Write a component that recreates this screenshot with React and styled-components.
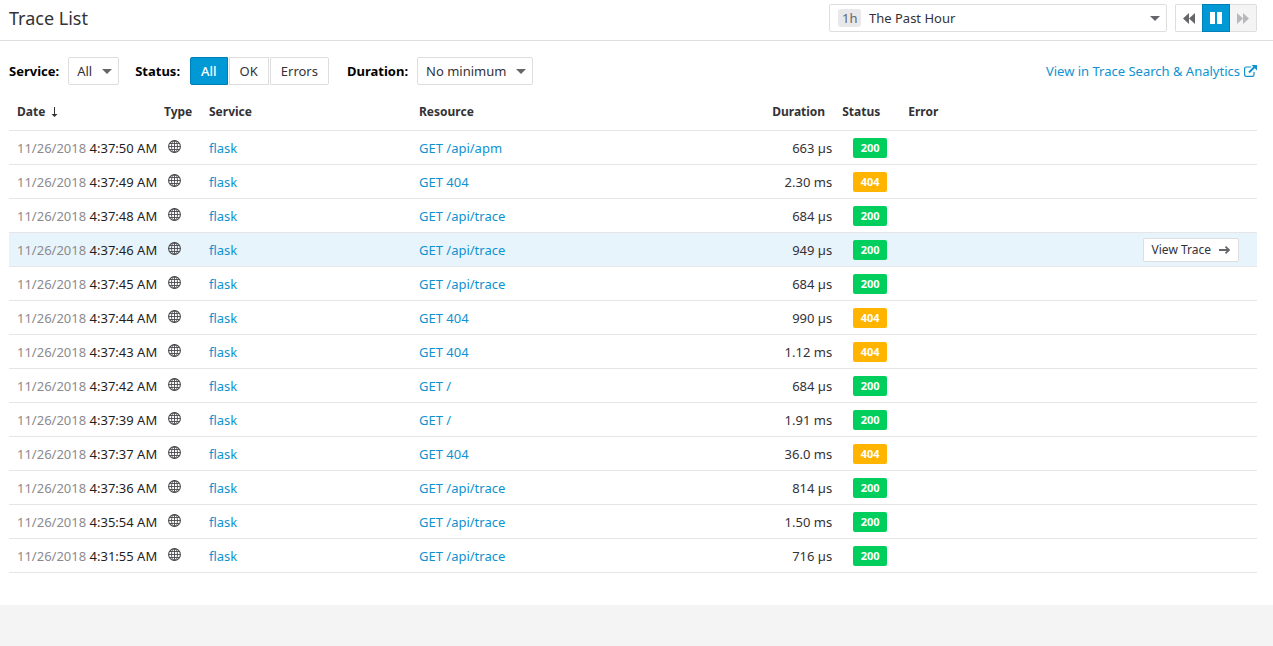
import React from "react";
import styled, { createGlobalStyle, css } from "styled-components";

const GlobalStyle = createGlobalStyle`
  *, *::before, *::after { box-sizing: border-box; }
  body {
    margin: 0;
    background: #f4f4f4;
    color: #333236;
    font-family: "Noto Sans", "Open Sans", sans-serif;
    font-size: 13px;
    line-height: 18px;
  }
  button, select { font: inherit; color: inherit; margin: 0; }
`;

const Panel = styled.main`
  min-height: 605px;
  background: #fff;
`;

const Header = styled.header`
  display: flex;
  align-items: center;
  gap: 8px;
  height: 41px;
  padding: 0 16px 4px 9px;
  border-bottom: 1px solid #dedede;
`;

const Title = styled.h1`
  flex: 1;
  margin: 0;
  font-size: 18px;
  font-weight: 400;
  line-height: 24px;
`;

const Toolbar = styled.div`
  display: flex;
  align-items: center;
  height: 28px;
  margin: 16px 16px 0 9px;
`;

const Label = styled.label`
  margin-right: ${(p) => p.$gap || 9}px;
  font-weight: 700;
  color: #000;
`;

const SelectBox = styled.div`
  position: relative;
  flex: none;
  width: ${(p) => p.$width}px;
  margin-right: ${(p) => p.$after || 0}px;
`;

const Select = styled.select`
  display: block;
  width: 100%;
  height: 28px;
  padding: 0 24px 0 ${(p) => (p.$tagged ? 39 : 8)}px;
  border: 1px solid #dedede;
  border-radius: 2px;
  background: #fff;
  appearance: none;
`;

const CaretIcon = styled.svg`
  position: absolute;
  top: 12px;
  right: 7px;
  width: 10px;
  height: 5px;
  fill: #66666a;
  pointer-events: none;
`;

const RangeTag = styled.span`
  position: absolute;
  top: 5px;
  left: 9px;
  padding: 0 4px;
  border-radius: 3px;
  background: #e8e8ea;
  color: #66666a;
  pointer-events: none;
`;

const Group = styled.div`
  display: flex;
  flex: none;
  margin-right: ${(p) => p.$after || 0}px;
  button:first-child { border-radius: 2px 0 0 2px; }
  button:last-child { border-radius: 0 2px 2px 0; }
`;

const activeStyle = css`
  border-color: #0080b8;
  background: #0099d6;
  color: #fff;
`;

const StatusButton = styled.button`
  height: 28px;
  padding: 0 10px;
  border: 1px solid #dedede;
  background: #fff;
  & + & { margin-left: 1px; }
  ${(p) => p.$active && activeStyle}
  ${(p) => p.$active && "font-weight: 500;"}
`;

const PlayerButton = styled.button`
  display: flex;
  align-items: center;
  justify-content: center;
  width: 28px;
  height: 28px;
  padding: 0;
  border: 1px solid #dedede;
  background: #fff;
  color: #66666a;
  &:first-child { border-right: 0; width: 27px; }
  &:last-child { border-left: 0; width: 27px; }
  &:disabled { background: #f4f4f4; color: #b8b8bb; }
  ${(p) => p.$active && activeStyle}
  svg { fill: currentColor; }
`;

const ExternalLink = styled.a`
  display: flex;
  align-items: center;
  gap: 4px;
  margin-left: auto;
  color: #0e93d0;
  text-decoration: none;
`;

const TableArea = styled.div`
  padding: 7px 16px 0 9px;
`;

const Table = styled.table`
  width: 100%;
  border-collapse: separate;
  border-spacing: 0;
  table-layout: fixed;
`;

const HeadCell = styled.th`
  height: 39px;
  padding: 2px 0 0 ${(p) => (p.$tight ? 2 : 8)}px;
  border-bottom: 1px solid #e6e6e6;
  font-size: 12px;
  font-weight: 700;
  text-align: left;
  white-space: nowrap;
`;

const SortIcon = styled.svg`
  margin-left: 6px;
  vertical-align: -1px;
`;

const Row = styled.tr`
  background: ${(p) => (p.$selected ? "#e8f4fb" : "#fff")};
`;

const Cell = styled.td`
  height: 34px;
  padding: ${(p) => (p.$center ? "0" : "0 8px")};
  border-bottom: 1px solid #e6e6e6;
  text-align: ${(p) => (p.$center ? "center" : p.$right ? "right" : "left")};
  white-space: nowrap;
`;

const ActionCell = styled(Cell)`
  padding: 0 18px;
  text-align: right;
`;

const TypeCell = styled(Cell)`
  padding: 0 12px 2px;
`;

const GlobeIcon = styled.svg`
  display: block;
  fill: none;
  stroke: #4a494d;
`;

const Day = styled.span`
  color: #8c8a8e;
`;

const Time = styled.span`
  color: #1f1e22;
`;

const CellLink = styled.a`
  color: #0e93d0;
  text-decoration: none;
`;

const Code = styled.span`
  display: block;
  width: 34px;
  height: 20px;
  margin: 0 auto;
  border-radius: 2px;
  background: ${(p) => (p.$code === "200" ? "#00cf5d" : "#ffb500")};
  color: #fff;
  font-size: 11px;
  font-weight: 700;
  line-height: 20px;
`;

const TraceButton = styled.button`
  display: inline-flex;
  align-items: center;
  gap: 8px;
  height: 24px;
  padding: 0 8px;
  border: 1px solid #dedede;
  border-radius: 2px;
  background: #fff;
  font-size: 12px;
  vertical-align: middle;
`;

const Caret = () => (
  <CaretIcon viewBox="0 0 10 5" aria-hidden="true">
    <path d="M0 0h10L5 5z" />
  </CaretIcon>
);

const Globe = () => (
  <GlobeIcon width="13" height="13" viewBox="0 0 13 13" role="img" aria-label="Web">
    <circle cx="6.5" cy="6.5" r="5.9" strokeWidth="1.1" />
    <ellipse cx="6.5" cy="6.5" rx="3" ry="5.9" strokeWidth="0.9" />
    <path d="M6.5 .6v11.8M.6 6.5h11.8M1.5 3.5h10M1.5 9.5h10" strokeWidth="0.9" />
  </GlobeIcon>
);

const traces = [
  ["4:37:50 AM", "GET /api/apm", "663 µs", "200"],
  ["4:37:49 AM", "GET 404", "2.30 ms", "404"],
  ["4:37:48 AM", "GET /api/trace", "684 µs", "200"],
  ["4:37:46 AM", "GET /api/trace", "949 µs", "200", true],
  ["4:37:45 AM", "GET /api/trace", "684 µs", "200"],
  ["4:37:44 AM", "GET 404", "990 µs", "404"],
  ["4:37:43 AM", "GET 404", "1.12 ms", "404"],
  ["4:37:42 AM", "GET /", "684 µs", "200"],
  ["4:37:39 AM", "GET /", "1.91 ms", "200"],
  ["4:37:37 AM", "GET 404", "36.0 ms", "404"],
  ["4:37:36 AM", "GET /api/trace", "814 µs", "200"],
  ["4:35:54 AM", "GET /api/trace", "1.50 ms", "200"],
  ["4:31:55 AM", "GET /api/trace", "716 µs", "200"],
];

const columnWidths = [147, 45, 210, "28.3%", 76, 60, undefined];

export default function App() {
  return (
    <>
      <GlobalStyle />
      <Panel>
        <Header>
          <Title>Trace List</Title>
          <SelectBox $width={338}>
            <Select $tagged aria-label="Time range">
              <option>The Past Hour</option>
            </Select>
            <RangeTag>1h</RangeTag>
            <Caret />
          </SelectBox>
          <Group>
            <PlayerButton aria-label="Back">
              <svg width="12" height="11" viewBox="0 0 12 11">
                <path d="M6 0v11L0 5.5zM12 0v11L6 5.5z" />
              </svg>
            </PlayerButton>
            <PlayerButton $active aria-label="Pause">
              <svg width="12" height="12" viewBox="0 0 12 12">
                <path d="M0 0h5v12H0zM7 0h5v12H7z" />
              </svg>
            </PlayerButton>
            <PlayerButton disabled aria-label="Forward">
              <svg width="12" height="11" viewBox="0 0 12 11">
                <path d="M0 0v11l6-5.5zM6 0v11l6-5.5z" />
              </svg>
            </PlayerButton>
          </Group>
        </Header>

        <Toolbar>
          <Label htmlFor="service">Service:</Label>
          <SelectBox $width={51} $after={16}>
            <Select id="service">
              <option>All</option>
            </Select>
            <Caret />
          </SelectBox>
          <Label as="span" id="status-label" $gap={10}>Status:</Label>
          <Group role="group" aria-labelledby="status-label" $after={18}>
            <StatusButton $active aria-pressed="true">All</StatusButton>
            <StatusButton aria-pressed="false">OK</StatusButton>
            <StatusButton aria-pressed="false">Errors</StatusButton>
          </Group>
          <Label htmlFor="duration">Duration:</Label>
          <SelectBox $width={116}>
            <Select id="duration">
              <option>No minimum</option>
            </Select>
            <Caret />
          </SelectBox>
          <ExternalLink href="#analytics">
            View in Trace Search &amp; Analytics
            <svg width="13" height="12" viewBox="0 0 13 12" fill="none" stroke="currentColor" aria-hidden="true">
              <path d="M7 2H2.3Q.6 2 .6 3.700V9.700Q.6 11.400 2.300 11.400H8.300Q10 11.400 10 9.700V7" strokeWidth="1.2" />
              <path d="M5 7.500L11.500 1" strokeWidth="1.900" />
              <path d="M7.500 0h5.500v5.500z" fill="currentColor" stroke="none" />
            </svg>
          </ExternalLink>
        </Toolbar>

        <TableArea>
          <Table>
            <colgroup>
              {columnWidths.map((width, i) => (
                <col key={i} width={width} />
              ))}
            </colgroup>
            <thead>
              <tr>
                <HeadCell>
                  Date
                  <SortIcon width="7" height="10" viewBox="0 0 7 10" fill="#333236" aria-hidden="true">
                    <path d="M3 0h1v7h2.500L3.500 10 .5 7H3z" />
                  </SortIcon>
                </HeadCell>
                <HeadCell>Type</HeadCell>
                <HeadCell>Service</HeadCell>
                <HeadCell>Resource</HeadCell>
                <HeadCell>Duration</HeadCell>
                <HeadCell $tight>Status</HeadCell>
                <HeadCell>Error</HeadCell>
              </tr>
            </thead>
            <tbody>
              {traces.map(([time, resource, duration, code, selected]) => (
                <Row key={time} $selected={selected}>
                  <Cell>
                    <Day>11/26/2018</Day> <Time>{time}</Time>
                  </Cell>
                  <TypeCell>
                    <Globe />
                  </TypeCell>
                  <Cell>
                    <CellLink href="#flask">flask</CellLink>
                  </Cell>
                  <Cell>
                    <CellLink href="#resource">{resource}</CellLink>
                  </Cell>
                  <Cell $right>{duration}</Cell>
                  <Cell $center>
                    <Code $code={code}>{code}</Code>
                  </Cell>
                  <ActionCell>
                    {selected && (
                      <TraceButton>
                        View Trace
                        <svg width="11" height="8" viewBox="0 0 11 8" fill="none" stroke="#66666a" strokeWidth="1.800" aria-hidden="true">
                          <path d="M0 4h10M6.500 .7L10 4 6.500 7.300" />
                        </svg>
                      </TraceButton>
                    )}
                  </ActionCell>
                </Row>
              ))}
            </tbody>
          </Table>
        </TableArea>
      </Panel>
    </>
  );
}
